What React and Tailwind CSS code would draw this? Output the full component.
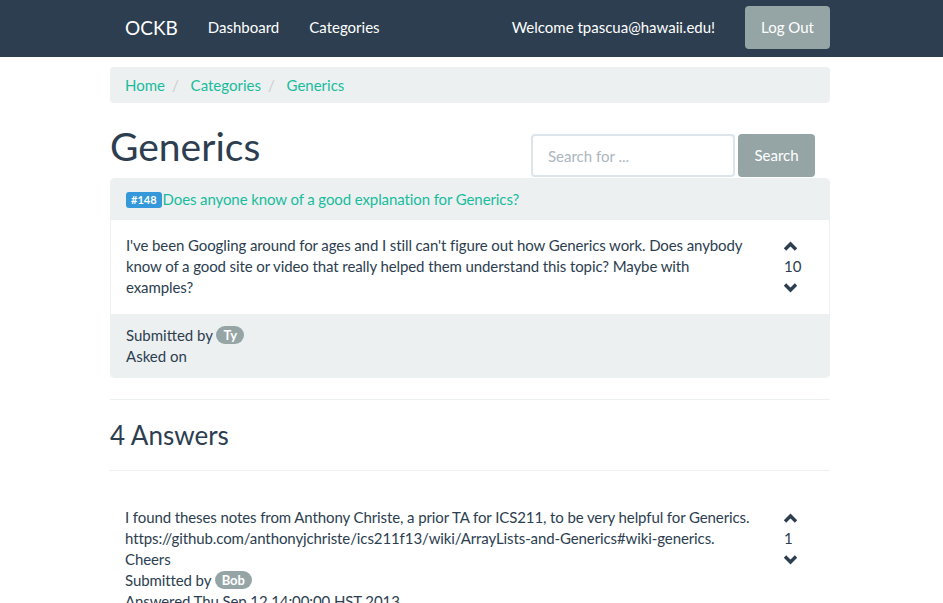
import React from "react";

const ChevronUp = () => (
    <svg width="15" height="10" viewBox="0 0 15 10">
        <polyline points="2,8.5 7.5,3 13,8.5" fill="none" stroke="#2c3e50" strokeWidth="3.4" />
    </svg>
);

const ChevronDown = () => (
    <svg width="15" height="10" viewBox="0 0 15 10">
        <polyline points="2,1.5 7.5,7 13,1.5" fill="none" stroke="#2c3e50" strokeWidth="3.4" />
    </svg>
);

const Vote = ({ count }) => (
    <div className="flex flex-col items-start text-[15px] leading-[21px] text-[#2c3e50]">
        <div className="h-[21px] flex items-center">
            <ChevronUp />
        </div>
        <div className="h-[21px] pl-px">{count}</div>
        <div className="h-[21px] flex items-center">
            <ChevronDown />
        </div>
    </div>
);

const Badge = ({ children }) => (
    <span className="inline-block bg-[#95a5a6] text-white font-bold text-[13px] leading-[18px] px-[7px] rounded-[10px] align-[1px]">
        {children}
    </span>
);

const App = () => {
    return (
        <div className="min-h-screen bg-white font-['Lato','Liberation_Sans',sans-serif] text-[15px] leading-[21px] text-[#2c3e50]">
            {/* navbar */}
            <nav className="h-[57px] bg-[#2c3e50]">
                <div className="w-[720px] ml-[110px] h-full flex items-center pb-[2px]">
                    <span className="px-[15px] text-[19px] text-white">OCKB</span>
                    <a className="px-[15px] text-white">Dashboard</a>
                    <a className="px-[15px] text-white">Categories</a>
                    <span className="ml-auto text-white">Welcome tpascua@hawaii.edu!</span>
                    <button className="ml-[30px] h-[43px] px-[16px] bg-[#95a5a6] text-white rounded-[4px]">
                        Log Out
                    </button>
                </div>
            </nav>

            <div className="w-[720px] ml-[110px] flex flex-col">
                {/* breadcrumb */}
                <div className="mt-[10px] h-[36px] bg-[#ecf0f1] rounded-[4px] px-[15px] flex items-center">
                    <a className="text-[#18bc9c]">Home</a>
                    <span className="pl-[7px] pr-[8px] text-[#cccccc]">/&nbsp;</span>
                    <a className="text-[#18bc9c]">Categories</a>
                    <span className="pl-[7px] pr-[8px] text-[#cccccc]">/&nbsp;</span>
                    <a className="text-[#18bc9c]">Generics</a>
                </div>

                {/* title + search */}
                <div className="mt-[21px] h-[54px] flex justify-between">
                    <h1 className="mt-px text-[39px] leading-[43px] font-normal">Generics</h1>
                    <div className="self-end mb-px mr-[15px] flex gap-[3px]">
                        <input
                            className="w-[204px] h-[43px] border-2 border-[#dce4ec] rounded-[4px] px-[15px] text-[15px] placeholder-[#acb6c0] outline-none"
                            placeholder="Search for ..."
                        />
                        <button className="w-[77px] h-[43px] bg-[#95a5a6] text-white rounded-[4px]">Search</button>
                    </div>
                </div>

                {/* question panel */}
                <div className="border border-[#ecf0f1] rounded-[4px] overflow-hidden">
                    <div className="bg-[#ecf0f1] px-[15px] py-[10px] flex items-center">
                        <span className="bg-[#3498db] text-white font-bold text-[11px] leading-[16px] px-[5px] rounded-[3px]">
                            #148
                        </span>
                        <a className="text-[#18bc9c] ml-px tracking-[-0.1px]">Does anyone know of a good explanation for Generics?</a>
                    </div>
                    <div className="bg-white px-[15px] pt-[15px] pb-[16px] flex">
                        <p className="w-[630px] tracking-[-0.1px]">
                            I've been Googling around for ages and I still can't figure out how Generics work. Does anybody
                            know of a good site or video that really helped them understand this topic? Maybe with
                            examples?
                        </p>
                        <div className="ml-[27px]">
                            <Vote count={10} />
                        </div>
                    </div>
                    <div className="bg-[#ecf0f1] px-[15px] pt-[11px] pb-[10px]">
                        <div>
                            Submitted by <Badge>Ty</Badge>
                        </div>
                        <div>Asked on</div>
                    </div>
                </div>

                <hr className="mt-[21px] border-t border-[#ecf0f1]" />
                <h3 className="mt-[21px] text-[26px] leading-[29px] font-normal">4 Answers</h3>
                <hr className="mt-[20px] border-t border-[#ecf0f1]" />

                {/* answer */}
                <div className="mt-[20px] px-[15px] pt-[16px] pb-[15px] flex">
                    <div className="w-[640px] tracking-[-0.1px]">
                        <p>
                            I found theses notes from Anthony Christe, a prior TA for ICS211, to be very helpful for Generics.
                            <br />
                            https://github.com/anthonyjchriste/ics211f13/wiki/ArrayLists-and-Generics#wiki-generics.
                            <br />
                            Cheers
                        </p>
                        <div>
                            Submitted by <Badge>Bob</Badge>
                        </div>
                        <div>Answered Thu Sep 12 14:00:00 HST 2013</div>
                    </div>
                    <div className="ml-[18px]">
                        <Vote count={1} />
                    </div>
                </div>
            </div>
        </div>
    );
};

export default App;
